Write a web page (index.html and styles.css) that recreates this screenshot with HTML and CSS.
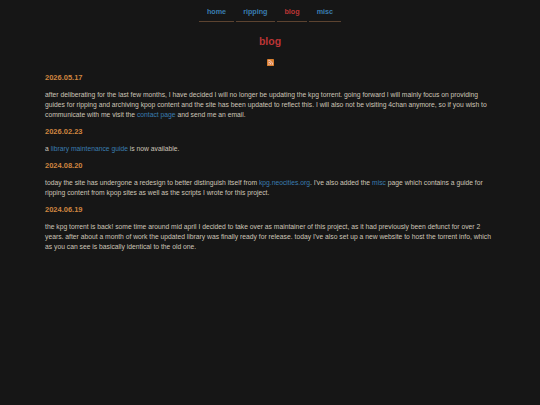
FILE: index.html
```html
<!DOCTYPE html>
<html lang="en">
<head>
<meta charset="utf-8">
<title>blog</title>
<link rel="stylesheet" href="styles.css">
</head>
<body>
<nav class="nav">
  <a class="nav-item" href="#">home</a>
  <a class="nav-item" href="#">ripping</a>
  <a class="nav-item current" href="#">blog</a>
  <a class="nav-item" href="#">misc</a>
</nav>
<main class="content">
  <h1 class="title">blog</h1>
  <div class="feed">
    <svg class="rss" viewBox="0 0 8 8" width="7" height="7" aria-label="rss">
      <rect width="8" height="8" rx="1" fill="#d97f2e"/>
      <circle cx="2.2" cy="5.8" r="0.8" fill="#fde"/>
      <path d="M1.5 3.5a3 3 0 0 1 3 3M1.5 1.6a4.9 4.9 0 0 1 4.9 4.9" fill="none" stroke="#fde" stroke-width="0.9"/>
    </svg>
  </div>
  <h2 class="date">2026.05.17</h2>
  <p class="entry">after deliberating for the last few months, I have decided I will no longer be updating the kpg torrent. going forward I will mainly focus on providing guides for ripping and archiving kpop content and the site has been updated to reflect this. I will also not be visiting 4chan anymore, so if you wish to communicate with me visit the <a href="#">contact page</a> and send me an email.</p>
  <h2 class="date">2026.02.23</h2>
  <p class="entry">a <a href="#">library maintenance guide</a> is now available.</p>
  <h2 class="date">2024.08.20</h2>
  <p class="entry">today the site has undergone a redesign to better distinguish itself from <a href="#">kpg.neocities.org</a>. I've also added the <a href="#">misc</a> page which contains a guide for ripping content from kpop sites as well as the scripts I wrote for this project.</p>
  <h2 class="date">2024.06.19</h2>
  <p class="entry">the kpg torrent is back! some time around mid april I decided to take over as maintainer of this project, as it had previously been defunct for over 2 years. after about a month of work the updated library was finally ready for release. today I've also set up a new website to host the torrent info, which as you can see is basically identical to the old one.</p>
</main>
</body>
</html>
```
FILE: styles.css
```css
html, body {
  margin: 0;
  background: #161616;
}
body {
  min-height: 405px;
  color: #cdc5b6;
  font-family: "Liberation Sans", Arial, sans-serif;
  font-size: 6.75px;
  line-height: 10px;
}
a {
  color: #3a7db0;
  text-decoration: none;
}
.nav {
  display: flex;
  justify-content: center;
  gap: 2px;
  padding-top: 7px;
}
.nav-item {
  padding: 0 7.5px 4px;
  border-bottom: 1px solid #5c4330;
  font-size: 7.2px;
  font-weight: bold;
  line-height: 10px;
}
.current {
  color: #bb3535;
}
.content {
  width: 450px;
  margin: 0 auto;
}
.title {
  margin: 0;
  padding-top: 12px;
  color: #bb3535;
  font-size: 10.5px;
  line-height: 14px;
  text-align: center;
}
.feed {
  display: flex;
  justify-content: center;
  padding-top: 11px;
}
.rss {
  display: block;
}
.date {
  margin: 0;
  padding-top: 7px;
  color: #cf8540;
  font-size: 7.5px;
  line-height: 10px;
}
.entry {
  margin: 0;
  padding-top: 7px;
}
```
